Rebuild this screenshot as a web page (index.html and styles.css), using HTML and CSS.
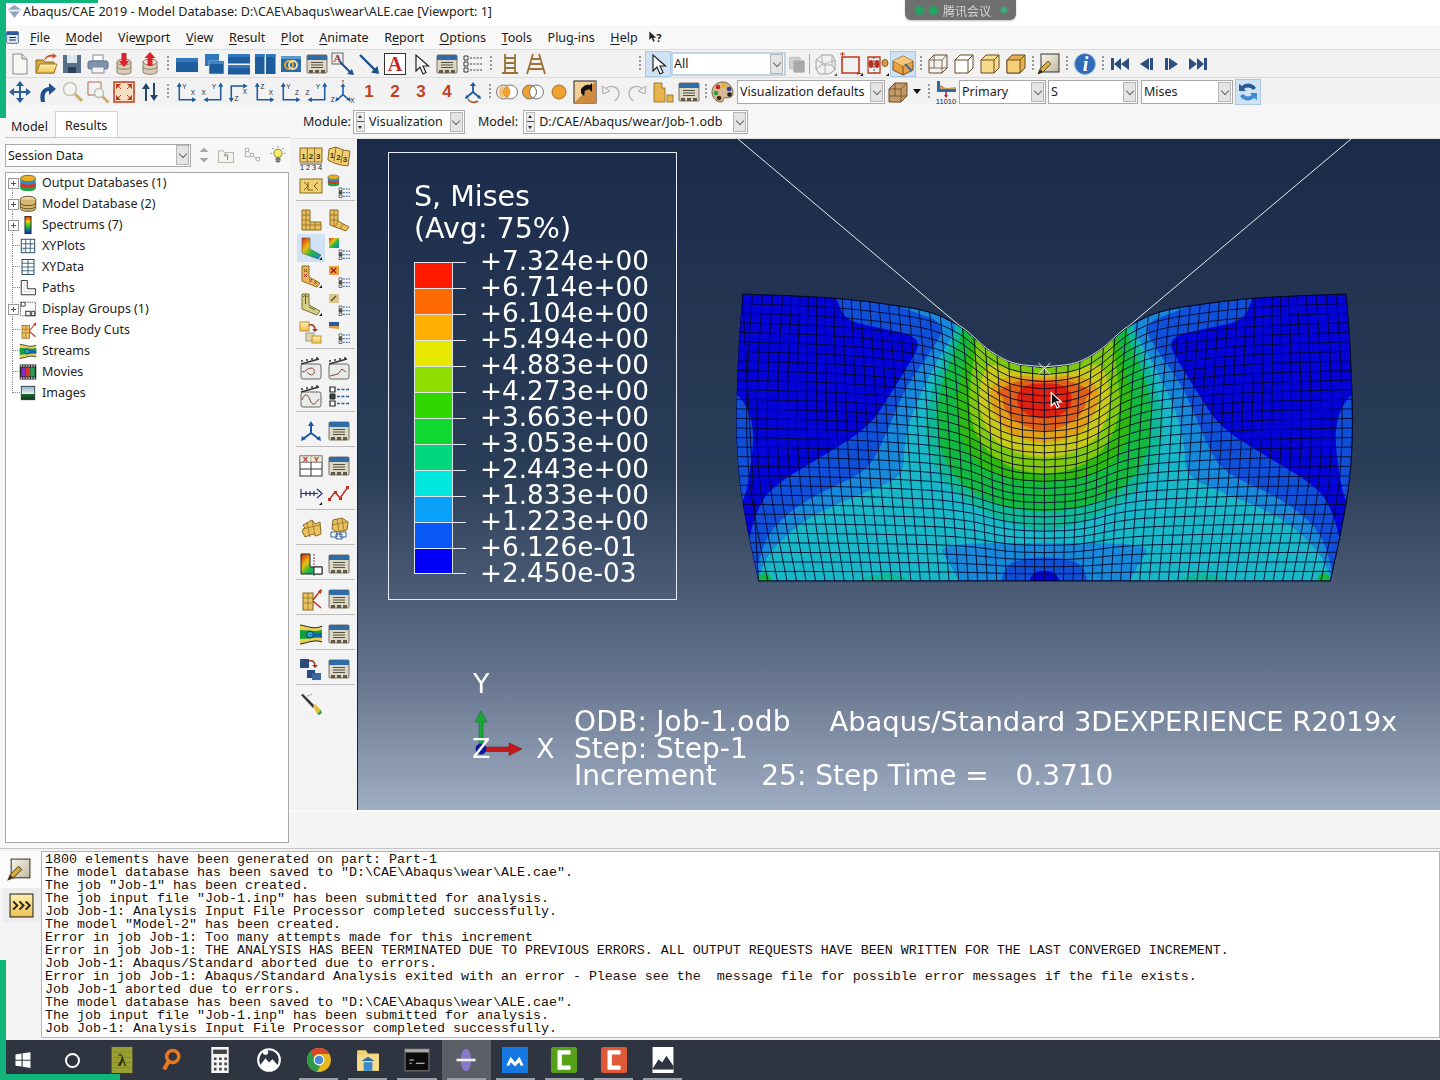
FILE: index.html
```html
<!DOCTYPE html>
<html lang="en">
<head>
<meta charset="utf-8">
<title>Abaqus/CAE 2019</title>
<link rel="stylesheet" href="styles.css">
</head>
<body>
<svg class="defs" aria-hidden="true">
<defs>
<linearGradient id="hot" x1="0" y1="0" x2="1" y2="1"><stop offset="0" stop-color="#e02010"/><stop offset=".35" stop-color="#e8c010"/><stop offset=".6" stop-color="#20b840"/><stop offset="1" stop-color="#1080e0"/></linearGradient>
<linearGradient id="spec" x1="0" y1="0" x2="0" y2="1"><stop offset="0" stop-color="#e81010"/><stop offset=".3" stop-color="#f0d000"/><stop offset=".6" stop-color="#10c040"/><stop offset="1" stop-color="#1020e0"/></linearGradient>
<linearGradient id="nt" x1="0" y1="0" x2="1" y2="1"><stop offset="0" stop-color="#f8f6ea"/><stop offset="1" stop-color="#bdb79c"/></linearGradient>
<linearGradient id="yel" x1="0" y1="0" x2="0" y2="1"><stop offset="0" stop-color="#fff0b0"/><stop offset="1" stop-color="#eec050"/></linearGradient>
<linearGradient id="sky" x1="0" y1="0" x2="0" y2="1"><stop offset="0" stop-color="#8ab0c8"/><stop offset=".55" stop-color="#e8f0f0"/><stop offset=".6" stop-color="#1a6030"/><stop offset="1" stop-color="#0c3c1c"/></linearGradient>
<symbol id="new" viewBox="0 0 24 24"><path d="M5 2h9l5 5v15H5z" fill="#f6f6f2" stroke="#8a8a8a"/><path d="M14 2v5h5" fill="#ddd" stroke="#8a8a8a"/></symbol>
<symbol id="open" viewBox="0 0 24 24"><path d="M2 8h7l2 2h9v11H2z" fill="#d9a848" stroke="#8a6a20"/><path d="M6 12h17l-3 9H2z" fill="url(#yel)" stroke="#a07a28"/><path d="M10 8c2-5 6-6 9-5l-1-2 5 3-5 3 1-2c-3-1-6 0-8 3z" fill="#d8502a"/></symbol>
<symbol id="save" viewBox="0 0 24 24"><rect x="3" y="3" width="18" height="18" fill="#56708c"/><rect x="7" y="3" width="10" height="8" fill="#dbe3ec"/><rect x="8" y="15" width="8" height="6" fill="#2c3e52"/></symbol>
<symbol id="print" viewBox="0 0 24 24"><rect x="7" y="3" width="10" height="6" fill="#fff" stroke="#889"/><rect x="2" y="9" width="20" height="8" rx="2" fill="#7e93b0" stroke="#5c6f8a"/><rect x="6" y="15" width="12" height="6" fill="#f4f4f4" stroke="#889"/></symbol>
<symbol id="dbdown" viewBox="0 0 24 24"><path d="M5 10v10c0 3 14 3 14 0V10z" fill="#d9cdb8" stroke="#8d8068"/><ellipse cx="12" cy="10" rx="7" ry="3" fill="#ece3d2" stroke="#8d8068"/><path d="M5 15c0 3 14 3 14 0" fill="none" stroke="#8d8068"/><path d="M9.500 1h5v8h3l-5.500 6-5.500-6h3z" fill="#d8242a"/></symbol>
<symbol id="dbup" viewBox="0 0 24 24"><path d="M5 10v10c0 3 14 3 14 0V10z" fill="#d9cdb8" stroke="#8d8068"/><ellipse cx="12" cy="10" rx="7" ry="3" fill="#ece3d2" stroke="#8d8068"/><path d="M5 15c0 3 14 3 14 0" fill="none" stroke="#8d8068"/><path d="M12 0l5.500 6h-3v8h-5V6h-3z" fill="#d8242a"/></symbol>
<symbol id="vp1" viewBox="0 0 24 24"><rect x="1" y="6" width="22" height="14" fill="#1d5d9b"/><rect x="1" y="6" width="22" height="4" fill="#2f78bd"/></symbol>
<symbol id="vp2" viewBox="0 0 24 24"><rect x="4" y="2" width="14" height="12" fill="#2f78bd"/><rect x="8" y="9" width="15" height="13" fill="#1d5d9b" stroke="#cfe0f0" stroke-width=".6"/><rect x="8" y="9" width="15" height="3" fill="#3f86c8"/></symbol>
<symbol id="vp3" viewBox="0 0 24 24"><rect x="1" y="2" width="22" height="9.500" fill="#1d5d9b"/><rect x="1" y="2" width="22" height="3" fill="#2f78bd"/><rect x="1" y="13" width="22" height="9.500" fill="#1d5d9b"/><rect x="1" y="13" width="22" height="3" fill="#2f78bd"/></symbol>
<symbol id="vp4" viewBox="0 0 24 24"><rect x="2" y="2" width="9.500" height="20" fill="#1d5d9b"/><rect x="2" y="2" width="9.500" height="3" fill="#2f78bd"/><rect x="13" y="2" width="9.500" height="20" fill="#1d5d9b"/><rect x="13" y="2" width="9.500" height="3" fill="#2f78bd"/></symbol>
<symbol id="link" viewBox="0 0 24 24"><rect x="2" y="4" width="20" height="16" fill="#2a6ba8"/><rect x="2" y="4" width="20" height="3" fill="#5b9ad0"/><circle cx="10" cy="13" r="4" fill="none" stroke="#f0a828" stroke-width="1.800"/><circle cx="14" cy="13" r="4" fill="none" stroke="#f4e0b0" stroke-width="1.800"/></symbol>
<symbol id="tbl" viewBox="0 0 24 24"><rect x="2" y="3" width="20" height="18" rx="1" fill="#dcd6c4" stroke="#7a7360"/><path d="M2 8V4a1 1 0 0 1 1-1h18a1 1 0 0 1 1 1v4z" fill="#2f6ca8"/><path d="M6 10.500h12M6 13h12M6 15.500h12" stroke="#55503f"/><path d="M4 18h4v3H4zM10 18h4v3h-4zM16 18h4v3h-4z" fill="#5e5844"/></symbol>
<symbol id="annot" viewBox="0 0 24 24"><rect x="1" y="1" width="11" height="11" fill="#eee" stroke="#666"/><text x="6.500" y="10" class="sv sm" fill="#903030">A</text><path d="M9 10l10 10" stroke="#17508f" stroke-width="2"/><path d="M23 23l-7-1 5-5z" fill="#17508f"/></symbol>
<symbol id="arrow" viewBox="0 0 24 24"><path d="M3 3l15 15" stroke="#17508f" stroke-width="2.400"/><path d="M22 22l-8-1.500 6.500-6.500z" fill="#17508f"/></symbol>
<symbol id="abox" viewBox="0 0 24 24"><rect x="1.500" y="1.500" width="21" height="21" fill="#fff" stroke="#333"/><text x="12" y="19" class="sv lg" fill="#c02828">A</text></symbol>
<symbol id="ptr" viewBox="0 0 24 24"><path d="M7 3v16l4-4 3 7 3-1.500-3-6.500h5.500z" fill="#fff" stroke="#222" stroke-width="1.200"/></symbol>
<symbol id="lst" viewBox="0 0 24 24"><path d="M3 4h4v4H3zM3 10h4v4H3zM3 16h4v4H3z" fill="#fff" stroke="#333"/><path d="M9 6h12M9 12h12M9 18h12" stroke="#334" stroke-dasharray="2 1.400"/></symbol>
<symbol id="lad" viewBox="0 0 24 24"><path d="M7 2v20M17 2v20M7 6h10M7 11h10M7 16h10M4 21h16" stroke="#9a7238" stroke-width="1.800" fill="none"/></symbol>
<symbol id="lad2" viewBox="0 0 24 24"><path d="M9 2L3 22M15 2l6 20M7.500 7h9M6 12h12M4.500 17h15" stroke="#9a7238" stroke-width="1.800" fill="none"/></symbol>
<symbol id="pan" viewBox="0 0 24 24"><path d="M12 1l4 5h-3v5h5V8l5 4-5 4v-3h-5v5h3l-4 5-4-5h3v-5H6v3l-5-4 5-4v3h5V6H8z" fill="#2b5f9e"/></symbol>
<symbol id="rot" viewBox="0 0 24 24"><path d="M7 22c-2-9 1-14 8-15V3l7 6-7 6v-4c-4 0-5 4-4 11z" fill="#1f4f8c"/></symbol>
<symbol id="mag" viewBox="0 0 24 24"><circle cx="10" cy="9" r="6.500" fill="#f4f4f0" stroke="#c4c4bc" stroke-width="1.500"/><path d="M15 14l7 7" stroke="#d0a868" stroke-width="3"/></symbol>
<symbol id="bzoom" viewBox="0 0 24 24"><path d="M2 2h13v8M2 2v13h8" stroke="#b06a50" fill="none"/><circle cx="13" cy="13" r="4.500" fill="#f4f4f0" stroke="#bbb" stroke-width="1.400"/><path d="M16.500 16.500l6 6" stroke="#d0a868" stroke-width="2.600"/></symbol>
<symbol id="fit" viewBox="0 0 24 24"><rect x="2" y="2" width="20" height="20" fill="#f6dec0" stroke="#c23c20" stroke-width="1.500"/><path d="M4 4l5 0-5 5zM20 4v5l-5-5zM4 20v-5l5 5zM20 20h-5l5-5z" fill="#c23c20"/><path d="M5 5l4 4M19 5l-4 4M5 19l4-4M19 19l-4-4" stroke="#c23c20"/></symbol>
<symbol id="flip" viewBox="0 0 24 24"><path d="M8 3l4 6H9v12H7V9H4zM16 21l-4-6h3V3h2v12h3z" fill="#22466f"/></symbol>
<symbol id="ax1" viewBox="0 0 28 24"><path d="M5 5v16h16" stroke="#1c5aa0" stroke-width="1.800" fill="none"/><path d="M5 1l3 5H2zM25 21l-5 3v-6z" fill="#1c5aa0"/><text x="11" y="8" class="sx">Y</text><text x="21" y="16" class="sx">X</text></symbol>
<symbol id="ax2" viewBox="0 0 28 24"><path d="M23 5v16H7" stroke="#1c5aa0" stroke-width="1.800" fill="none"/><path d="M23 1l3 5h-6zM3 21l5-3v6z" fill="#1c5aa0"/><text x="15" y="8" class="sx">Y</text><text x="3" y="16" class="sx">X</text></symbol>
<symbol id="ax3" viewBox="0 0 28 24"><path d="M5 20V5h15" stroke="#1c5aa0" stroke-width="1.800" fill="none"/><path d="M5 24l-3-5h6zM24 5l-5-3v6z" fill="#1c5aa0"/><text x="11" y="22" class="sx">Z</text><text x="21" y="14" class="sx">X</text></symbol>
<symbol id="ax4" viewBox="0 0 28 24"><path d="M5 5v16h16" stroke="#1c5aa0" stroke-width="1.800" fill="none"/><path d="M5 1l3 5H2zM25 21l-5 3v-6z" fill="#1c5aa0"/><text x="11" y="8" class="sx">Z</text><text x="21" y="16" class="sx">X</text></symbol>
<symbol id="ax5" viewBox="0 0 28 24"><path d="M5 5v16h16" stroke="#1c5aa0" stroke-width="1.800" fill="none"/><path d="M5 1l3 5H2zM25 21l-5 3v-6z" fill="#1c5aa0"/><text x="11" y="8" class="sx">Y</text><text x="21" y="16" class="sx">Z</text></symbol>
<symbol id="ax6" viewBox="0 0 28 24"><path d="M23 5v16H7" stroke="#1c5aa0" stroke-width="1.800" fill="none"/><path d="M23 1l3 5h-6zM3 21l5-3v6z" fill="#1c5aa0"/><text x="15" y="8" class="sx">Y</text><text x="3" y="16" class="sx">Z</text></symbol>
<symbol id="ax7" viewBox="0 0 28 26"><path d="M14 16V6M14 16l-7 6M14 16l7 6" stroke="#1c5aa0" stroke-width="1.800"/><path d="M14 3l3 4h-6zM5 24l1-5 4 3zM23 24l-1-5-4 3z" fill="#1c5aa0"/><text x="14" y="3" class="sx">Y</text><text x="2" y="25" class="sx">Z</text><text x="25" y="26" class="sx">X</text></symbol>
<symbol id="axr" viewBox="0 0 24 24"><path d="M12 12V5M12 12l-6 5M12 12l6 5" stroke="#1c5aa0" stroke-width="1.800"/><path d="M12 2l3 4H9zM4 19l1-4 3 3zM20 19l-1-4-3 3z" fill="#1c5aa0"/><path d="M7 19c2 4 7 4 10 2" stroke="#b04a20" stroke-width="1.600" fill="none"/></symbol>
<symbol id="venn1" viewBox="0 0 24 24"><circle cx="8.500" cy="12" r="7" fill="#f4f0e8" stroke="#777"/><circle cx="15.500" cy="12" r="7" fill="#fff" stroke="#777"/><path d="M12 6a7 7 0 0 1 0 12 7 7 0 0 1 0-12z" fill="#eea030"/><path d="M4 12a4.500 6 0 0 1 4.500-6v12A4.500 6 0 0 1 4 12z" fill="#f4c070"/></symbol>
<symbol id="venn2" viewBox="0 0 24 24"><circle cx="15.500" cy="12" r="7" fill="#fff" stroke="#777"/><circle cx="8.500" cy="12" r="7" fill="#eea030" stroke="#777"/><path d="M12 6a7 7 0 0 1 0 12 7 7 0 0 1 0-12z" fill="#fff" stroke="#777"/></symbol>
<symbol id="dot" viewBox="0 0 24 24"><circle cx="12" cy="12" r="7" fill="#eea030" stroke="#a87020"/></symbol>
<symbol id="boxc" viewBox="0 0 24 24"><rect x="1" y="1" width="22" height="22" fill="#f0d098" stroke="#222"/><path d="M1 23L23 1v22z" fill="#d08a40"/><path d="M8 9c3-4 6-5 9-4l2-2v9l-3-3-4 2-1 5-3-3z" fill="#111"/></symbol>
<symbol id="undo" viewBox="0 0 24 24"><path d="M6 10c4-6 14-4 14 4 0 3-2 5-4 7" stroke="#b4b4b4" stroke-width="1.300" fill="none"/><path d="M3 6l1 8 7-3z" fill="#f0f0f0" stroke="#aaa"/></symbol>
<symbol id="redo" viewBox="0 0 24 24"><path d="M18 10c-4-6-14-4-14 4 0 3 2 5 4 7" stroke="#b4b4b4" stroke-width="1.300" fill="none"/><path d="M21 6l-1 8-7-3z" fill="#f0f0f0" stroke="#aaa"/></symbol>
<symbol id="dg" viewBox="0 0 24 24"><path d="M3 3h8v5h3v14H3z" fill="#eab24c" stroke="#8a6a20" stroke-width=".8"/><rect x="16" y="15" width="6" height="7" fill="#eab24c" stroke="#8a6a20" stroke-width=".8"/></symbol>
<symbol id="pal" viewBox="0 0 24 24"><path d="M12 2C5 2 1 7 1 12s4 10 9 10c3 0 2-3 3-4s5 1 8-2c3-4-1-14-9-14z" fill="#d8b890" stroke="#7a6040"/><circle cx="7" cy="7" r="2.300" fill="#c82020"/><circle cx="13" cy="5.500" r="2.300" fill="#e8b020"/><circle cx="18" cy="9" r="2.300" fill="#2a3fa0"/><circle cx="5" cy="13" r="2.300" fill="#20a040"/><circle cx="8" cy="18" r="2.300" fill="#402818"/><circle cx="18.500" cy="14.500" r="2.300" fill="#222"/></symbol>
<symbol id="cub" viewBox="0 0 24 24"><path d="M3 9l6-6h12v13l-6 6H3z" fill="#c49a68" stroke="#6a4c28"/><path d="M3 9h12v13M15 9l6-6M9 3v13H3M9 16h12" fill="none" stroke="#6a4c28" stroke-width=".8"/></symbol>
<symbol id="prim" viewBox="0 0 24 24"><path d="M3 1h3v8h16v3H3z" fill="#2b6ca8"/><path d="M6 5c3 0 3 3 7 3s5-1 9-1v2H6z" fill="#c8a060"/><path d="M12 12v4" stroke="#c02020" stroke-width="1.500"/><path d="M12 18l-2-3h4z" fill="#c02020"/><text x="12" y="24" class="sx">11010</text></symbol>
<symbol id="copy" viewBox="0 0 24 24"><rect x="3" y="4" width="13" height="14" rx="1" fill="#d0d0d0" stroke="#bbb"/><rect x="8" y="8" width="13" height="14" rx="1" fill="#a8a8a8" stroke="#bbb"/></symbol>
<symbol id="wire3" viewBox="0 0 24 24"><path d="M3 8l6-5h10l3 5v10l-6 4H6l-3-5z" fill="#f0f0f0" stroke="#a0a0a0"/><path d="M3 8l9 4 10-4M12 12v10M9 3v10l-6 4M19 3v10l3 5M9 13h10" fill="none" stroke="#a0a0a0" stroke-width=".8"/><path d="M24 24h-3l3-3z" fill="#555"/></symbol>
<symbol id="rect" viewBox="0 0 24 24"><path d="M3 5v16h17V5z" fill="none" stroke="#c0381c" stroke-width="1.600"/><path d="M1 2h5M3.500 0v4M19 20v3M17.500 21.500h5" stroke="#c0381c"/><path d="M24 24h-3l3-3z" fill="#111"/></symbol>
<symbol id="nds" viewBox="0 0 24 24"><path d="M3 5v16h12V5z" fill="none" stroke="#c0381c" stroke-width="1.300"/><path d="M9 5v16" stroke="#444" stroke-dasharray="2 1"/><ellipse cx="6" cy="12" rx="2.500" ry="4" fill="#b83020"/><ellipse cx="12" cy="12" rx="2.500" ry="4" fill="#b83020"/><ellipse cx="20" cy="11" rx="3" ry="3.500" fill="#d0a040" stroke="#806020"/><path d="M24 24h-3l3-3z" fill="#111"/></symbol>
<symbol id="boxor" viewBox="0 0 24 24"><path d="M2 9l10-5 10 5v9l-10 5-10-5z" fill="#e8a040" stroke="#7a4c18"/><path d="M2 9l10 5 10-5M12 14v9" fill="none" stroke="#7a4c18"/><path d="M2 9l10-5 10 5-10 5z" fill="#f4c878"/><path d="M14 12l7 7" stroke="#4a6a90" stroke-width="2.200"/></symbol>
<symbol id="wc1" viewBox="0 0 24 24"><path d="M3 8l5-5h13v13l-5 5H3z" fill="none" stroke="#6a4c28"/><path d="M3 8h13v13M16 8l5-5M8 3v13H3M8 16h13" fill="none" stroke="#6a4c28" stroke-width=".8"/></symbol>
<symbol id="wc2" viewBox="0 0 24 24"><path d="M3 8l5-5h13v13l-5 5H3z" fill="#fff" stroke="#6a4c28"/><path d="M3 8h13v13M16 8l5-5" fill="none" stroke="#6a4c28"/></symbol>
<symbol id="wc3" viewBox="0 0 24 24"><path d="M3 8l5-5h13v13l-5 5H3z" fill="#f8dc8c" stroke="#6a4c28"/><path d="M3 8h13v13M16 8l5-5" fill="none" stroke="#6a4c28"/></symbol>
<symbol id="wc4" viewBox="0 0 24 24"><path d="M3 8l5-5h13v13l-5 5H3z" fill="#e8b048" stroke="#6a4c28"/><path d="M3 8h13v13H3z" fill="#f6d078" stroke="#6a4c28"/><path d="M16 8l5-5" fill="none" stroke="#6a4c28"/></symbol>
<symbol id="note" viewBox="0 0 24 24"><rect x="4" y="2" width="18" height="18" fill="url(#nt)" stroke="#333"/><path d="M1 22l2-5 8-8 3 3-8 8z" fill="#d8b040" stroke="#6a5020"/><path d="M1 22l2-5 3 3z" fill="#333"/></symbol>
<symbol id="info" viewBox="0 0 24 24"><circle cx="12" cy="12" r="10.500" fill="#2f6cb8" stroke="#9cbcdc"/><text x="12.500" y="18.500" class="sv lg it" fill="#fff">i</text></symbol>
<symbol id="first" viewBox="0 0 24 24"><path d="M3 6h3v12H3zM13 6v12l-7-6zM21 6v12l-8-6z" fill="#2a4f80"/></symbol>
<symbol id="prev" viewBox="0 0 24 24"><path d="M15 6v12l-9-6zM16 6h3v12h-3z" fill="#2a4f80"/></symbol>
<symbol id="next" viewBox="0 0 24 24"><path d="M9 6v12l9-6zM8 6H5v12h3z" fill="#2a4f80"/></symbol>
<symbol id="last" viewBox="0 0 24 24"><path d="M21 6h-3v12h3zM11 6v12l7-6zM3 6v12l8-6z" fill="#2a4f80"/></symbol>
<symbol id="sync" viewBox="0 0 24 24"><path d="M20 8C17 3 10 2 6 6L3 4v7h7L8 9c3-2 6-2 9 1z" fill="#2a5a9a"/><path d="M4 16c3 5 10 6 14 2l3 2v-7h-7l2 2c-3 2-6 2-9-1z" fill="#3f8ad0"/></symbol>
<symbol id="t123" viewBox="0 0 24 24"><rect x="1" y="2" width="22" height="14" fill="#f2d070" stroke="#8a6a20"/><path d="M8.300 2v14M15.600 2v14" stroke="#8a6a20"/><text x="4.600" y="13" class="sm2">1</text><text x="12" y="13" class="sm2">2</text><text x="19.300" y="13" class="sm2">3</text><path d="M1 18h22" stroke="#555"/><text x="3" y="23.500" class="sx">1</text><text x="9" y="23.500" class="sx">2</text><text x="15" y="23.500" class="sx">3</text><text x="21" y="23.500" class="sx">4</text></symbol>
<symbol id="t123b" viewBox="0 0 24 24"><path d="M2 3l7-2 7 3 7 1-2 15-7-1-7-2-6-3z" fill="#f2d070" stroke="#8a6a20"/><path d="M9 1L7 15M16 4l-2 13" stroke="#8a6a20"/><text x="5" y="12" class="sm2">1</text><text x="11.500" y="14" class="sm2">2</text><text x="18" y="16" class="sm2">3</text></symbol>
<symbol id="tsy" viewBox="0 0 24 24"><rect x="1" y="5" width="22" height="14" fill="#f2d070" stroke="#8a6a20"/><path d="M5 8l4 4-4 4M9 8v8h5M19 8l-4 4 4 4" stroke="#7a5818" fill="none"/></symbol>
<symbol id="stack" viewBox="0 0 14 14"><ellipse cx="7" cy="3.500" rx="6" ry="2.500" fill="#e8b020" stroke="#6a5020" stroke-width=".6"/><path d="M1 3.500v7c0 3 12 3 12 0v-7c0 3-12 3-12 0z" fill="#2090d0"/><path d="M1 6c0 3 12 3 12 0v2.500c0 3-12 3-12 0z" fill="#e03020"/><path d="M1 8.500c0 3 12 3 12 0V11c0 3-12 3-12 0z" fill="#20a040"/></symbol>
<symbol id="opt" viewBox="0 0 24 24"><path d="M12 14h3v2.500h-3zM12 17.500h3V20h-3zM12 21h3v2.500h-3z" fill="#fff" stroke="#333" stroke-width=".7"/><path d="M12 17.500h3V20h-3z" fill="#3a5a3a"/><path d="M16 15h7M16 18.700h7M16 22.300h7" stroke="#2e5c98" stroke-dasharray="1.800 1"/></symbol>
<symbol id="lm" viewBox="0 0 24 24"><path d="M3 2h8v12h11v8H3z" fill="#e8c060" stroke="#8a6a20"/><path d="M7 2v20M3 7h8M3 12h8M3 17h19M11 14v8M16 14v8" stroke="#8a6a20" stroke-width=".8"/></symbol>
<symbol id="lmb" viewBox="0 0 24 24"><path d="M3 2h8v11l11 6-3 4L3 17z" fill="#e8c060" stroke="#8a6a20"/><path d="M7 2v17M3 7h8M3 12h8M11 13l-3 6M16 16l-3 5" stroke="#8a6a20" stroke-width=".8"/></symbol>
<symbol id="lc" viewBox="0 0 24 24"><path d="M3 2h8v11l11 6-3 4L3 17z" fill="url(#hot)" stroke="#444" stroke-width=".5"/><path d="M23 24h-3l3-3z" fill="#111"/></symbol>
<symbol id="optc" viewBox="0 0 24 24"><use href="#opt"/><path d="M2 2h10v10H2z" fill="url(#hot)"/></symbol>
<symbol id="lx" viewBox="0 0 24 24"><path d="M3 2h7v11l11 6-3 4L3 17z" fill="#eab45a" stroke="#8a6a20"/><path d="M5 5l3 3M8 5l-3 3M5 10l3 3M8 10l-3 3M10 15l3 3M13 15l-3 3M15 17l3 3M18 17l-3 3" stroke="#a03020" stroke-width=".9"/><path d="M23 24h-3l3-3z" fill="#111"/></symbol>
<symbol id="optx" viewBox="0 0 24 24"><use href="#opt"/><rect x="2" y="2" width="10" height="9" fill="#e8a040"/><path d="M4 4l5 5M9 4L4 9" stroke="#a02010" stroke-width="1.400"/></symbol>
<symbol id="ly" viewBox="0 0 24 24"><path d="M3 2h7v11l11 6-3 4L3 17z" fill="#d4d08a" stroke="#7a7030"/><path d="M6.500 4v8M4 5l2.500-2L9 5" stroke="#4a6030" fill="none"/><path d="M10 15l6 3" stroke="#6a6020"/><path d="M23 24h-3l3-3z" fill="#111"/></symbol>
<symbol id="opty" viewBox="0 0 24 24"><use href="#opt"/><rect x="2" y="2" width="10" height="9" fill="#d8c890"/><path d="M4 9l5-5" stroke="#6a5020" stroke-width="1.400"/></symbol>
<symbol id="copyy" viewBox="0 0 24 24"><rect x="1" y="2" width="9" height="9" fill="url(#yel)" stroke="#c09030"/><path d="M10 5c4-1 6 1 6 5" stroke="#a03020" stroke-width="1.400" fill="none"/><path d="M16 12l-3-3h6z" fill="#a03020"/><rect x="7" y="13" width="8" height="8" fill="#e0d8b0" stroke="#998"/><rect x="13" y="16" width="9" height="7" fill="url(#yel)" stroke="#c09030"/></symbol>
<symbol id="optb" viewBox="0 0 24 24"><use href="#opt"/><rect x="2" y="2" width="10" height="4" fill="#2a5a9a"/><path d="M2 6h10v3c-4 0-6-1-10-1z" fill="#e0a040"/></symbol>
<symbol id="mov" viewBox="0 0 24 24"><rect x="2" y="8" width="20" height="15" rx="2" fill="#e8ece8" stroke="#666"/><path d="M2 8l18-5M2 5h2M7 4h2M12 3h2M17 2h2" stroke="#333" stroke-width="1.400"/><path d="M3 16c4 0 5-4 9-4 3 0 4 3 3 5-1 3-5 2-7-1" fill="none" stroke="#884030"/></symbol>
<symbol id="mov2" viewBox="0 0 24 24"><rect x="2" y="8" width="20" height="15" rx="2" fill="#e8ece8" stroke="#666"/><path d="M2 8l18-5M2 5h2M7 4h2M12 3h2M17 2h2" stroke="#333" stroke-width="1.400"/><path d="M3 20l8-2 4-5 4 3" fill="none" stroke="#884030"/></symbol>
<symbol id="mov3" viewBox="0 0 24 24"><rect x="2" y="8" width="20" height="15" rx="2" fill="#e8ece8" stroke="#666"/><path d="M2 8l18-5M2 5h2M7 4h2M12 3h2M17 2h2" stroke="#333" stroke-width="1.400"/><path d="M3 16c3-7 5-7 8 0s5 4 9-1" fill="none" stroke="#884030"/></symbol>
<symbol id="lst2" viewBox="0 0 24 24"><path d="M3 3h5v5H3zM3 17h5v5H3z" fill="#fff" stroke="#222" stroke-width="1.200"/><path d="M3 10h5v5H3z" fill="#3a4a3a" stroke="#222"/><path d="M10 5.500h12M10 12.500h12M10 19.500h12" stroke="#2e5c98" stroke-width="1.400" stroke-dasharray="3 1.500"/></symbol>
<symbol id="tri" viewBox="0 0 24 24"><path d="M12 14V6M12 14L4 20M12 14l8 6" stroke="#1c5aa0" stroke-width="2"/><path d="M12 2l3 5H9zM2 22l1-5 4 3zM22 22l-1-5-4 3z" fill="#1c5aa0"/></symbol>
<symbol id="xyt" viewBox="0 0 24 24"><rect x="1" y="2" width="22" height="20" fill="#fff" stroke="#333"/><path d="M12 2v20M1 8h22M1 15h22" stroke="#333"/><rect x="1" y="2" width="22" height="6" fill="#e8e0c8" opacity=".7"/><text x="6.500" y="7.500" class="sm2 red">X</text><text x="17.500" y="7.500" class="sm2 red">Y</text></symbol>
<symbol id="pth" viewBox="0 0 24 24"><path d="M2 7v9M2 11.500h17M7 9v5M11 9v5M15 9v5" stroke="#2a2a70" stroke-width="1.200" fill="none"/><path d="M18 7l5 4.500-5 4.500" stroke="#2a2a70" stroke-width="1.200" fill="none"/><path d="M23 23h-3l3-3z" fill="#111"/></symbol>
<symbol id="xyl" viewBox="0 0 24 24"><path d="M2 18l6-8 5 6 8-11" stroke="#c03020" stroke-width="1.400" fill="none"/><path d="M1 16h3v3H1zM7 9h3v3H7zM12 15h3v3h-3zM19 4h3v3h-3z" fill="#c03020"/></symbol>
<symbol id="fc2" viewBox="0 0 24 24"><path d="M4 8l9-5 3 4 5-2 1 12-5 2-3-2-8 3-3-6 3-3z" fill="#e8c060" stroke="#8a6a20"/><path d="M8 6l3 14M13 3l3 15M3 12l18-4" stroke="#8a6a20" stroke-width=".7"/></symbol>
<symbol id="fc3" viewBox="0 0 24 24"><path d="M6 3l9-2 6 4-1 8-10 2-5-3z" fill="#e8c060" stroke="#8a6a20"/><path d="M10 2l2 12M15 2l2 11M5 8l15-3" stroke="#8a6a20" stroke-width=".7"/><path d="M4 15h6v5H4zM9 17h6v5H9zM13 15h6v5h-6z" fill="#fff" stroke="#2e5c98"/></symbol>
<symbol id="lcut" viewBox="0 0 24 24"><path d="M2 2h9v13h12v7H2z" fill="url(#hot)" stroke="#222"/><path d="M15 2v22" stroke="#b03040" stroke-dasharray="2 1"/><rect x="15" y="15" width="8" height="7" fill="#fff" stroke="#222"/></symbol>
<symbol id="fb" viewBox="0 0 24 24"><rect x="4" y="6" width="10" height="17" fill="#e8c060" stroke="#8a6a20"/><path d="M4 11h10M4 16h10M9 6v17" stroke="#8a6a20" stroke-width=".7"/><path d="M14 13L22 3M14 14l8 7" stroke="#c03020" stroke-width="1.400"/><path d="M23 2l-1 5-3-3z" fill="#c03020"/></symbol>
<symbol id="str" viewBox="0 0 24 24"><path d="M1 3c8 1 14 5 22 1v16c-8-3-14 1-22 2z" fill="#e8d050"/><path d="M1 8c8 0 14 2 22 0v8c-8-1-14 1-22 1z" fill="#10a040"/><path d="M8 11h15v4c-5-1-11 1-15-1z" fill="#1060c0"/><circle cx="11" cy="12.500" r="3.500" fill="#20a0c0" stroke="#0a3a60"/><path d="M1 3c8 1 14 5 22 1M1 22c8-1 14-5 22-2" stroke="#222" fill="none"/></symbol>
<symbol id="cpd" viewBox="0 0 24 24"><rect x="1" y="2" width="9" height="9" fill="#2a4a80"/><path d="M10 4c4-1 6 1 6 5" stroke="#a03020" stroke-width="1.400" fill="none"/><path d="M16 11l-3-3h6z" fill="#a03020"/><rect x="8" y="13" width="8" height="8" fill="#2a4a80"/><rect x="13" y="16" width="9" height="7" fill="#3a6aa0"/></symbol>
<symbol id="pen" viewBox="0 0 24 24"><path d="M2 3l2-1 12 12-2 2z" fill="#333"/><path d="M14 14l2-2 6 6-4 4z" fill="#e8c040"/><path d="M18 22l4-4 1 3-3 2z" fill="#30a040"/><path d="M8 4c2 0 3-1 5-2" stroke="#888" stroke-dasharray="2 1" fill="none"/></symbol>
<symbol id="updn" viewBox="0 0 16 24"><path d="M8 2l6 6H2zM8 22l6-6H2z" fill="#a8a8a8"/></symbol>
<symbol id="dirup" viewBox="0 0 24 24"><path d="M3 7h6l1 2h11v12H3z" fill="#f4f4ee" stroke="#a8a8a0"/><path d="M14 18v-6H10l2-2M10 12l2 2" stroke="#777" fill="none"/></symbol>
<symbol id="fam" viewBox="0 0 24 24"><path d="M4 4h4v4H4zM10 10h4v4h-4zM17 15h4v4h-4z" fill="#fff" stroke="#a0a0a0"/><path d="M8 8l2 2M14 14l3 2M4 8v6h6" stroke="#a0a0a0" fill="none"/></symbol>
<symbol id="bulb" viewBox="0 0 24 24"><circle cx="12" cy="10" r="5" fill="#f4ec70" stroke="#7a7020"/><path d="M9 15h6v4H9z" fill="#777"/><path d="M10 20h4" stroke="#444" stroke-width="1.500"/><path d="M12 1v2M3 10h2M19 10h2M5 4l2 1M19 4l-2 1" stroke="#777"/></symbol>
<symbol id="xyp" viewBox="0 0 24 24"><rect x="3" y="3" width="18" height="18" fill="#fff" stroke="#12405c" stroke-width="1.200"/><path d="M9 3v18M15 3v18M3 9h18M3 15h18" stroke="#12405c"/><path d="M5 18l4-3M15 12l3-3" stroke="#5a7a90"/></symbol>
<symbol id="xyd" viewBox="0 0 24 24"><rect x="4" y="2" width="16" height="20" fill="#fff" stroke="#12405c" stroke-width="1.200"/><path d="M12 2v20M4 7h16M4 12h16M4 17h16" stroke="#12405c"/></symbol>
<symbol id="ppath" viewBox="0 0 24 24"><path d="M3 2h8v11h11v8H3z" fill="#fff" stroke="#222" stroke-width="1.200"/><path d="M7 2v15h15" stroke="#ccc" fill="none"/></symbol>
<symbol id="dgr" viewBox="0 0 24 24"><path d="M2 3h6v5H2zM2 8v13h6M8 3h14v18H8" fill="#fff" stroke="#444" stroke-dasharray="2 1"/><rect x="3" y="3" width="5" height="5" fill="#fff" stroke="#333"/><rect x="9" y="15" width="6" height="6" fill="#fff" stroke="#222" stroke-width="1.200"/><rect x="17" y="15" width="4" height="6" fill="#fff" stroke="#222" stroke-width="1.200"/></symbol>
<symbol id="mvi" viewBox="0 0 24 24"><rect x="1" y="2" width="22" height="20" fill="#222"/><path d="M2 4h20M2 20h20" stroke="#ddd" stroke-dasharray="2 1.500" stroke-width="2"/><rect x="3" y="6" width="6" height="12" fill="#8030c0"/><rect x="9" y="6" width="6" height="12" fill="#e03030"/><rect x="15" y="6" width="6" height="12" fill="#20a050"/></symbol>
<symbol id="img" viewBox="0 0 24 24"><rect x="3" y="3" width="18" height="18" fill="url(#sky)" stroke="#122"/></symbol>
<symbol id="mdb" viewBox="0 0 14 14"><ellipse cx="7" cy="3.500" rx="6" ry="2.500" fill="#e8d8a8" stroke="#5a4a20" stroke-width=".7"/><path d="M1 3.500v7c0 3 12 3 12 0v-7" fill="#d8b870" stroke="#5a4a20" stroke-width=".7"/><path d="M1 6c0 3 12 3 12 0M1 8.500c0 3 12 3 12 0" fill="none" stroke="#5a4a20" stroke-width=".7"/></symbol>
<symbol id="win" viewBox="0 0 24 24"><path d="M2 4.500l8-1.200v8.200H2zM11.500 3.100L22 1.600v10H11.500zM2 13h8v7.800l-8-1.200zM11.500 13H22v9.500l-10.500-1.500z" fill="#fff"/></symbol>
<symbol id="lam" viewBox="0 0 24 30"><rect width="24" height="30" fill="#9aa030"/><path d="M2 6h20M2 12h20M2 18h20M2 24h20" stroke="#7a8020" stroke-width=".8"/><text x="12" y="22" class="sv lg dk">λ</text></symbol>
<symbol id="ser" viewBox="0 0 24 30"><circle cx="14" cy="11" r="7" fill="none" stroke="#ea7a20" stroke-width="4"/><path d="M9 17l-5 9" stroke="#ea7a20" stroke-width="4.500"/></symbol>
<symbol id="calc" viewBox="0 0 20 30"><rect width="20" height="30" fill="#f4f4f4"/><rect x="2" y="3" width="16" height="5" fill="#444"/><path d="M3 12h3v3H3zM9 12h3v3H9zM15 12h3v3h-3zM3 18h3v3H3zM9 18h3v3H9zM15 18h3v3h-3zM3 24h3v3H3zM9 24h3v3H9zM15 24h3v3h-3z" fill="#444"/></symbol>
<symbol id="mtc" viewBox="0 0 30 30"><circle cx="15" cy="15" r="12.500" fill="#2e3440" stroke="#fff" stroke-width="2.400"/><path d="M4 22l7-9 4 5 4-4 7 8c-5 7-17 7-22 0z" fill="#fff"/><circle cx="11" cy="6" r="3" fill="#fff"/></symbol>
<symbol id="chr" viewBox="0 0 24 24"><circle cx="12" cy="12" r="11" fill="#e8b820"/><path d="M12 1a11 11 0 0 1 9.500 5.500H12a5.500 5.500 0 0 0-5 3L4 4.500A11 11 0 0 1 12 1z" fill="#d8442e"/><path d="M1 12a11 11 0 0 1 3-8l5 8a5 5 0 0 0 4 5.500L10 23A11 11 0 0 1 1 12z" fill="#2c9a48"/><circle cx="12" cy="12" r="5" fill="#fff"/><circle cx="12" cy="12" r="4" fill="#4a88d8"/></symbol>
<symbol id="fold" viewBox="0 0 24 24"><path d="M2 3h8l2 3h10v16H2z" fill="#f0d070"/><rect x="2" y="7" width="20" height="15" fill="#f4dc8c"/><path d="M8 14h8v8H8z" fill="#3a8ad0"/><path d="M6 13l6-4 6 4z" fill="#2a6ab0"/></symbol>
<symbol id="cmd" viewBox="0 0 24 24"><rect x="1" y="2" width="22" height="20" fill="#0c0c0c" stroke="#777"/><rect x="1" y="2" width="22" height="3" fill="#aaa"/><path d="M5 12h4M5 15h2M11 15h8" stroke="#ddd"/></symbol>
<symbol id="abq" viewBox="0 0 24 30"><ellipse cx="12" cy="15" rx="6" ry="13" fill="#8878c8"/><rect x="1" y="13.500" width="22" height="3" fill="#f0f0f0"/></symbol>
<symbol id="mx" viewBox="0 0 24 24"><rect width="24" height="24" fill="#1478e0"/><path d="M4 17l4-8 4 5 4-5 4 8h-3l-1-3-4 4-4-4-1 3z" fill="#fff"/></symbol>
<symbol id="gc" viewBox="0 0 24 24"><rect width="24" height="24" rx="2" fill="#58a018"/><path d="M18 5H8v14h10" fill="none" stroke="#fff" stroke-width="4"/></symbol>
<symbol id="oc" viewBox="0 0 24 24"><rect width="24" height="24" rx="2" fill="#e05a38"/><path d="M18 5H8v14h10" fill="none" stroke="#fff" stroke-width="4"/></symbol>
<symbol id="mtw" viewBox="0 0 24 30"><rect width="24" height="30" fill="#fff"/><path d="M0 25l7-11 4 4 5-8 8 12v8H0z" fill="#2e3440"/><path d="M0 26h24v4H0z" fill="#fff"/></symbol>
<symbol id="arr" viewBox="0 0 24 24"><path d="M7 2v18l4.500-4.500 3 7 3-1.500-3-6.500h6z" fill="#111" stroke="#fff" stroke-width="1.600"/></symbol>
<symbol id="hlp" viewBox="0 0 18 18"><path d="M3 2v11l3-3 2 5 2-1-2-4h4z" fill="#222"/></symbol>
<symbol id="winm" viewBox="0 0 18 18"><rect x="2" y="2" width="14" height="14" rx="1" fill="#dfe9f4" stroke="#2e5c98"/><rect x="2" y="2" width="14" height="4" fill="#2e5c98"/><path d="M5 9h8M5 12h8" stroke="#222" stroke-width="1.400"/></symbol>
<symbol id="ttl" viewBox="0 0 18 18"><path d="M9 2l7 5-7 9-7-9z" fill="#8fa6c2"/><path d="M2 7h14v2H2z" fill="#e8eef4"/></symbol>
</defs>
</svg>

<div class="frame frame-top"></div>
<div class="frame frame-left"></div>
<div class="frame frame-left2"></div>
<div class="frame frame-bot"></div>
<div class="meet"><i class="mdot"></i><i class="mdot"></i><span class="mname">腾讯会议</span><i class="mdot small"></i></div>

<header class="titlebar"><svg class="ttlicon"><use href="#ttl"/></svg><span>Abaqus/CAE 2019 - Model Database: D:\CAE\Abaqus\wear\ALE.cae [Viewport: 1]</span></header>

<nav class="menubar">
<svg class="winicon"><use href="#winm"/></svg>
<span><u>F</u>ile</span><span><u>M</u>odel</span><span>Vie<u>w</u>port</span><span><u>V</u>iew</span><span><u>R</u>esult</span><span><u>P</u>lot</span><span><u>A</u>nimate</span><span>R<u>e</u>port</span><span><u>O</u>ptions</span><span><u>T</u>ools</span><span>Plu<u>g</u>-ins</span><span><u>H</u>elp</span>
<svg class="hlpicon"><use href="#hlp"/></svg><b class="hq">?</b>
</nav>

<section class="tbar tb1">
<div class="b"><svg><use href="#new"/></svg></div><div class="b"><svg><use href="#open"/></svg></div><div class="b"><svg><use href="#save"/></svg></div><div class="b"><svg><use href="#print"/></svg></div><div class="b"><svg><use href="#dbdown"/></svg></div><div class="b"><svg><use href="#dbup"/></svg></div>
<i class="grip"></i>
<div class="b"><svg><use href="#vp1"/></svg></div><div class="b"><svg><use href="#vp2"/></svg></div><div class="b"><svg><use href="#vp3"/></svg></div><div class="b"><svg><use href="#vp4"/></svg></div><div class="b"><svg><use href="#link"/></svg></div><div class="b"><svg><use href="#tbl"/></svg></div><div class="b"><svg><use href="#annot"/></svg></div><div class="b"><svg><use href="#arrow"/></svg></div><div class="b"><svg><use href="#abox"/></svg></div><div class="b"><svg><use href="#ptr"/></svg></div><div class="b"><svg><use href="#tbl"/></svg></div><div class="b"><svg><use href="#lst"/></svg></div>
<i class="grip"></i>
<div class="b"><svg><use href="#lad"/></svg></div><div class="b"><svg><use href="#lad2"/></svg></div>
<i class="grip gap-a"></i>
<div class="b on"><svg><use href="#ptr"/></svg></div>
<div class="combo c-all"><span>All</span><i class="chev"></i></div>
<div class="b nar"><svg><use href="#copy"/></svg></div>
<i class="bar"></i>
<div class="b"><svg><use href="#wire3"/></svg></div><div class="b"><svg><use href="#rect"/></svg></div><div class="b"><svg><use href="#nds"/></svg></div><div class="b on"><svg><use href="#boxor"/></svg></div>
<i class="grip w9"></i>
<div class="b"><svg><use href="#wc1"/></svg></div><div class="b"><svg><use href="#wc2"/></svg></div><div class="b"><svg><use href="#wc3"/></svg></div><div class="b"><svg><use href="#wc4"/></svg></div>
<i class="grip w7"></i>
<div class="b"><svg><use href="#note"/></svg></div>
<i class="grip w10"></i>
<div class="b"><svg><use href="#info"/></svg></div>
<i class="grip w9"></i>
<div class="b"><svg><use href="#first"/></svg></div><div class="b"><svg><use href="#prev"/></svg></div><div class="b"><svg><use href="#next"/></svg></div><div class="b"><svg><use href="#last"/></svg></div>
</section>

<section class="tbar tb2">
<div class="b"><svg><use href="#pan"/></svg></div><div class="b"><svg><use href="#rot"/></svg></div><div class="b"><svg><use href="#mag"/></svg></div><div class="b"><svg><use href="#bzoom"/></svg></div><div class="b"><svg><use href="#fit"/></svg></div><div class="b"><svg><use href="#flip"/></svg></div>
<i class="grip"></i>
<div class="b"><svg><use href="#ax1"/></svg></div><div class="b"><svg><use href="#ax2"/></svg></div><div class="b"><svg><use href="#ax3"/></svg></div><div class="b"><svg><use href="#ax4"/></svg></div><div class="b"><svg><use href="#ax5"/></svg></div><div class="b"><svg><use href="#ax6"/></svg></div><div class="b"><svg><use href="#ax7"/></svg></div>
<div class="b num">1</div><div class="b num">2</div><div class="b num">3</div><div class="b num">4</div>
<div class="b"><svg><use href="#axr"/></svg></div>
<i class="grip w8"></i>
<div class="b"><svg><use href="#venn1"/></svg></div><div class="b"><svg><use href="#venn2"/></svg></div><div class="b"><svg><use href="#dot"/></svg></div><div class="b"><svg><use href="#boxc"/></svg></div><div class="b"><svg><use href="#undo"/></svg></div><div class="b"><svg><use href="#redo"/></svg></div><div class="b"><svg><use href="#dg"/></svg></div><div class="b"><svg><use href="#tbl"/></svg></div>
<i class="grip w8"></i>
<div class="b"><svg><use href="#pal"/></svg></div>
<div class="combo c-vis"><span>Visualization defaults</span><i class="chev"></i></div>
<div class="b"><svg><use href="#cub"/></svg></div><i class="drop"></i>
<i class="grip w8"></i>
<div class="b"><svg><use href="#prim"/></svg></div>
<div class="combo c-p"><span>Primary</span><i class="chev"></i></div>
<div class="combo c-s"><span>S</span><i class="chev"></i></div>
<div class="combo c-m"><span>Mises</span><i class="chev"></i></div>
<div class="b on"><svg><use href="#sync"/></svg></div>
</section>

<main class="main">
<aside class="left">
<div class="tabs"><span class="tab">Model</span><span class="tab sel">Results</span></div>
<div class="sess"><div class="combo c-sess"><span>Session Data</span><i class="chev"></i></div>
<svg class="s1"><use href="#updn"/></svg><svg class="s2"><use href="#dirup"/></svg><svg class="s2"><use href="#fam"/></svg><svg class="s2"><use href="#bulb"/></svg></div>
<ul class="tree">
<li class="exp"><i class="lead"></i><svg><use href="#stack"/></svg>Output Databases (1)</li>
<li class="exp"><i class="lead"></i><svg><use href="#mdb"/></svg>Model Database (2)</li>
<li class="exp"><i class="lead"></i><svg class="spec"><rect x="6" y="0" width="6" height="18" fill="url(#spec)" stroke="#222"/></svg>Spectrums (7)</li>
<li><i class="lead"></i><svg><use href="#xyp"/></svg>XYPlots</li>
<li><i class="lead"></i><svg><use href="#xyd"/></svg>XYData</li>
<li><i class="lead"></i><svg><use href="#ppath"/></svg>Paths</li>
<li class="exp"><i class="lead"></i><svg><use href="#dgr"/></svg>Display Groups (1)</li>
<li><i class="lead"></i><svg><use href="#fb"/></svg>Free Body Cuts</li>
<li><i class="lead"></i><svg><use href="#str"/></svg>Streams</li>
<li><i class="lead"></i><svg><use href="#mvi"/></svg>Movies</li>
<li class="last"><i class="lead"></i><svg><use href="#img"/></svg>Images</li>
</ul>
</aside>

<div class="right">
<div class="modbar">
<label>Module:</label><div class="combo c-mod"><i class="spin"></i><span>Visualization</span><i class="chev"></i></div>
<label class="lm2">Model:</label><div class="combo c-mdl"><i class="spin"></i><span>D:/CAE/Abaqus/wear/Job-1.odb</span><i class="chev"></i></div>
</div>
<div class="work">
<div class="toolbox">
<div class="tg tg-a"><div class="tr"><svg><use href="#t123"/></svg><svg><use href="#t123b"/></svg></div><div class="tr"><svg><use href="#tsy"/></svg><svg class="ovl"><use href="#opt"/><use href="#stack" width="13" height="13"/></svg></div></div>
<div class="tg tg-b"><div class="tr"><svg><use href="#lm"/></svg><svg><use href="#lmb"/></svg></div><div class="tr"><svg class="on"><use href="#lc"/></svg><svg><use href="#optc"/></svg></div><div class="tr"><svg><use href="#lx"/></svg><svg><use href="#optx"/></svg></div><div class="tr"><svg><use href="#ly"/></svg><svg><use href="#opty"/></svg></div><div class="tr"><svg><use href="#copyy"/></svg><svg><use href="#optb"/></svg></div></div>
<div class="tg"><div class="tr"><svg><use href="#mov"/></svg><svg><use href="#mov2"/></svg></div><div class="tr"><svg><use href="#mov3"/></svg><svg><use href="#lst2"/></svg></div></div>
<div class="tg"><div class="tr"><svg><use href="#tri"/></svg><svg><use href="#tbl"/></svg></div></div>
<div class="tg"><div class="tr"><svg><use href="#xyt"/></svg><svg><use href="#tbl"/></svg></div><div class="tr"><svg><use href="#pth"/></svg><svg><use href="#xyl"/></svg></div></div>
<div class="tg"><div class="tr"><svg><use href="#fc2"/></svg><svg><use href="#fc3"/></svg></div></div>
<div class="tg"><div class="tr"><svg><use href="#lcut"/></svg><svg><use href="#tbl"/></svg></div></div>
<div class="tg"><div class="tr"><svg><use href="#fb"/></svg><svg><use href="#tbl"/></svg></div></div>
<div class="tg"><div class="tr"><svg><use href="#str"/></svg><svg><use href="#tbl"/></svg></div></div>
<div class="tg"><div class="tr"><svg><use href="#cpd"/></svg><svg><use href="#tbl"/></svg></div></div>
<div class="tg end"><div class="tr"><svg><use href="#pen"/></svg></div></div>
</div>

<div class="viewport">
<canvas id="model" class="model" width="1083" height="671"></canvas>
<svg class="cursor"><use href="#arr"/></svg>
<div class="legend">
<div class="lg-title">S, Mises<br>(Avg: 75%)</div>
<div class="lg-rows">
<div class="lg-row"><i class="sw c1"></i><span>+7.324e+00</span></div>
<div class="lg-row"><i class="sw c2"></i><span>+6.714e+00</span></div>
<div class="lg-row"><i class="sw c3"></i><span>+6.104e+00</span></div>
<div class="lg-row"><i class="sw c4"></i><span>+5.494e+00</span></div>
<div class="lg-row"><i class="sw c5"></i><span>+4.883e+00</span></div>
<div class="lg-row"><i class="sw c6"></i><span>+4.273e+00</span></div>
<div class="lg-row"><i class="sw c7"></i><span>+3.663e+00</span></div>
<div class="lg-row"><i class="sw c8"></i><span>+3.053e+00</span></div>
<div class="lg-row"><i class="sw c9"></i><span>+2.443e+00</span></div>
<div class="lg-row"><i class="sw c10"></i><span>+1.833e+00</span></div>
<div class="lg-row"><i class="sw c11"></i><span>+1.223e+00</span></div>
<div class="lg-row"><i class="sw c12"></i><span>+6.126e-01</span></div>
<div class="lg-row nosw"><i class="sw"></i><span>+2.450e-03</span></div>
</div>
</div>
<svg class="triad" viewBox="0 0 60 50"><path d="M9 4l6 11h-4v27H7V15H3z" fill="#18a838" stroke="#0b6a20" stroke-width=".5"/><path d="M50 42l-13-6v4H12v4.500h25v4z" fill="#c81818" stroke="#701010" stroke-width=".5"/><circle cx="9" cy="42" r="5.500" fill="#0a1aa0"/></svg>
<span class="axl ax-y">Y</span><span class="axl ax-z">Z</span><span class="axl ax-x">X</span>
<div class="info"><div><span class="odb">ODB: Job-1.odb</span><span class="prod">    Abaqus/Standard 3DEXPERIENCE R2019x</span></div><div>Step: Step-1</div><div>Increment     25: Step Time =   0.3710</div></div>
</div>
</div>
<div class="strip"></div>
</div>
</main>

<section class="msgrow">
<div class="msgtabs"><div class="mt act"><svg><use href="#note"/></svg></div><div class="mt pr"><svg viewBox="0 0 24 24"><rect x="1" y="1" width="22" height="22" fill="url(#yel)" stroke="#222"/><path d="M4 8l4 4-4 4M10 8l4 4-4 4M16 8l4 4-4 4" stroke="#222" stroke-width="1.800" fill="none"/></svg></div></div>
<pre class="msg">1800 elements have been generated on part: Part-1
The model database has been saved to "D:\CAE\Abaqus\wear\ALE.cae".
The job "Job-1" has been created.
The job input file "Job-1.inp" has been submitted for analysis.
Job Job-1: Analysis Input File Processor completed successfully.
The model "Model-2" has been created.
Error in job Job-1: Too many attempts made for this increment
Error in job Job-1: THE ANALYSIS HAS BEEN TERMINATED DUE TO PREVIOUS ERRORS. ALL OUTPUT REQUESTS HAVE BEEN WRITTEN FOR THE LAST CONVERGED INCREMENT.
Job Job-1: Abaqus/Standard aborted due to errors.
Error in job Job-1: Abaqus/Standard Analysis exited with an error - Please see the  message file for possible error messages if the file exists.
Job Job-1 aborted due to errors.
The model database has been saved to "D:\CAE\Abaqus\wear\ALE.cae".
The job input file "Job-1.inp" has been submitted for analysis.
Job Job-1: Analysis Input File Processor completed successfully.</pre>
</section>

<footer class="taskbar">
<div class="tk first"><svg class="w22"><use href="#win"/></svg></div>
<div class="tk"><i class="cort"></i></div>
<div class="tk"><svg><use href="#lam"/></svg></div>
<div class="tk"><svg><use href="#ser"/></svg></div>
<div class="tk"><svg><use href="#calc"/></svg></div>
<div class="tk"><svg><use href="#mtc"/></svg></div>
<div class="tk run"><svg><use href="#chr"/></svg></div>
<div class="tk run"><svg><use href="#fold"/></svg></div>
<div class="tk run"><svg><use href="#cmd"/></svg></div>
<div class="tk run act"><svg><use href="#abq"/></svg></div>
<div class="tk run"><svg><use href="#mx"/></svg></div>
<div class="tk run"><svg><use href="#gc"/></svg></div>
<div class="tk run"><svg><use href="#oc"/></svg></div>
<div class="tk run"><svg><use href="#mtw"/></svg></div>
</footer>
<script src="app.js"></script>
</body>
</html>
```

FILE: styles.css
```css
*{box-sizing:border-box}
html,body{margin:0;padding:0}
body{width:1440px;height:1080px;overflow:hidden;background:#f4f4f4;font-family:"Noto Sans","Open Sans",sans-serif;font-size:12.5px;color:#1a1a1a;position:relative}
.defs{position:absolute;width:0;height:0}
i{font-style:normal;display:block}
.sv{font-family:"Liberation Serif",serif;text-anchor:middle;font-weight:700}
.sm{font-size:11px}
.lg{font-size:20px}
.it{font-style:italic}
.dk{fill:#2a3010}
.sx{font-family:"Liberation Sans",sans-serif;font-size:7.500px;text-anchor:middle;fill:#223}
.sm2{font-family:"Liberation Sans",sans-serif;font-size:8px;text-anchor:middle;font-weight:700;fill:#4a3208}
.sm2.red{fill:#b03020}

.frame{position:absolute;background:#10b57c;z-index:5}
.frame-top{left:0;top:0;width:98px;height:3px}
.frame-left{left:0;top:0;width:6px;height:118px}
.frame-left2{left:0;top:960px;width:6px;height:120px}
.frame-bot{left:0;top:1074px;width:120px;height:6px}
.meet{position:absolute;left:905px;top:0;width:111px;height:20px;background:#6f6f6f;border-radius:0 0 6px 6px;display:flex;align-items:center;gap:5px;padding-left:10px;z-index:5;box-shadow:0 1px 2px rgba(0,0,0,.25)}
.mdot{width:9px;height:9px;border-radius:50%;background:#1fa860;filter:blur(1px)}
.mdot.small{width:6px;height:6px;margin-left:5px;background:#30c080}
.mname{font-family:"Noto Sans CJK SC",sans-serif;font-size:12px;color:#d4d4d4;filter:blur(.4px)}

.titlebar{height:25px;background:#fff;display:flex;align-items:center;padding:0 0 2px 6px;font-size:12.6px;color:#222}
.ttlicon{width:17px;height:17px;flex:none}
.menubar{height:24px;background:#f8f8f8;display:flex;align-items:center;padding-left:5px;font-size:12.5px}
.winicon{width:15px;height:15px;margin-right:10px;flex:none}
.menubar span{margin-right:15.600px;white-space:nowrap}
.menubar u{text-underline-offset:2px}
.hlpicon{width:14px;height:14px;margin-left:-6px}
.hq{font-size:11px;margin-left:-5px}

.tbar{height:28px;background:#f2f2f2;display:flex;align-items:center;padding-left:7px;border-top:1px solid #dcdcdc}
.b{width:26px;height:26px;display:flex;align-items:center;justify-content:center;flex:none}
.b svg{width:24px;height:24px}
.b.nar{width:22px}
.b.nar svg{width:20px;height:20px}
.b.on{background:#cfe3f5;border:1px solid #a8c8e6}
.num{font-family:"Liberation Sans",sans-serif;font-weight:700;font-size:17px;color:#c0431f}
.grip{width:11px;height:24px;flex:none;position:relative}
.grip::after{content:"";position:absolute;left:4px;top:4px;width:2px;height:16px;background:repeating-linear-gradient(#999 0 2px,transparent 2px 4px)}
.gap-a{margin-left:86px;width:10px}
.w7{width:7px}
.w8{width:8px}
.w9{width:9px}
.w10{width:10px}
.w7::after,.w8::after{left:3px}
.bar{width:1px;height:20px;background:#aaa;margin:0 2px 0 1px;flex:none}
.combo{display:flex;align-items:center;height:24px;background:#fff;border:1px solid #a9a9a9;font-size:12.5px;padding-left:2px;flex:none;white-space:nowrap;overflow:hidden}
.combo span{flex:1}
.chev{width:13px;height:20px;margin-right:1px;background:#e4e4e4;border:1px solid #b4b4b4;position:relative;flex:none}
.chev::after{content:"";position:absolute;left:2.500px;top:5px;width:5px;height:5px;border-right:1px solid #666;border-bottom:1px solid #666;transform:rotate(45deg)}
.c-all{width:115px;border:2px solid #c0d4e8;padding-left:1px}
.c-vis{width:148px;margin-left:1px}
.c-p{width:87px;margin-right:2px}
.c-s{width:90px;margin-right:3px}
.c-m{width:92px;margin-right:2px}
.drop{width:0;height:0;border:4px solid transparent;border-top:5px solid #111;margin:4px 4px 0 2px;flex:none}

.main{display:flex;height:743px}
.left{width:290px;flex:none;background:#f7f7f7;padding:7px 0 0 5px;display:flex;flex-direction:column}
.tabs{display:flex;height:26px;align-items:flex-end;border-bottom:1px solid #c8c8c8}
.tab{padding:0 7px 2px 6px;height:22px;display:flex;align-items:flex-end;font-size:12.5px}
.tab.sel{background:#fff;border:1px solid #d4d4d4;border-bottom:0;height:26px;padding:0 10px 3px 9px}
.sess{display:flex;align-items:center;height:34px;gap:5px}
.c-sess{width:186px;height:23px}
.s1{width:12px;height:20px;margin-left:2px}
.s2{width:20px;height:20px;margin-left:1px}
.tree{list-style:none;margin:0;padding:0;width:284px;height:671px;background:#fff;border:1px solid #a8a8a8;font-size:12.5px;color:#222}
.tree li{height:21px;display:flex;align-items:center;white-space:nowrap;padding-bottom:2px}
.tree svg{width:18px;height:18px;margin-right:5px;flex:none}
.lead{width:13px;height:21px;flex:none;position:relative}
.lead::before{content:"";position:absolute;left:6px;top:0;height:21px;border-left:1px dotted #888}
.lead::after{content:"";position:absolute;left:7px;top:10px;width:7px;border-top:1px dotted #888}
.tree li:first-child .lead::before{top:10px;height:11px}
.tree .last .lead::before{height:11px}
.exp .lead::after{left:2px;top:6px;width:9px;height:9px;border:1px solid #999;background:linear-gradient(#555,#555) center/5px 1px no-repeat,linear-gradient(#555,#555) center/1px 5px no-repeat,#fff}

.right{flex:1;display:flex;flex-direction:column;min-width:0}
.modbar{height:34px;background:#f6f6f6;display:flex;align-items:center;padding-left:13px;font-size:12.5px;border-bottom:1px solid #e0e0e0;flex:none}
.modbar label{margin-right:2px}
.modbar .lm2{margin-left:13px;margin-right:5px}
.spin{width:9px;height:20px;flex:none;margin-right:4px;background:linear-gradient(#555,#555) center/7px 1px no-repeat,#ececec;border:1px solid #bbb;position:relative}
.spin::before{content:"";position:absolute;left:1px;top:2px;border:2.500px solid transparent;border-bottom:3px solid #333;border-top:0}
.spin::after{content:"";position:absolute;left:1px;bottom:2px;border:2.500px solid transparent;border-top:3px solid #333;border-bottom:0}
.c-mod{width:112px}
.c-mdl{width:225px}
.work{display:flex;height:671px;flex:none}
.toolbox{width:67px;flex:none;background:#f3f3f3;display:flex;flex-direction:column;padding-left:6px;padding-right:2px}
.tg{padding:5px 0 1px;border-bottom:1px solid #bcbcbc}
.tg-a{padding-bottom:0}
.tg-b{padding-bottom:2px}
.tg.end{border:0}
.tr{height:28px;display:flex;align-items:center;gap:4px;padding-left:3px}
.tr svg{width:24px;height:24px;flex:none}
.tr svg.on{background:#cfe3f5;outline:2px solid #cfe3f5}
.viewport{flex:1;position:relative;border-left:1px solid #15233c;background:linear-gradient(#1a2b4a 0,#2b3e58 50%,#4a5a74 67%,#68768f 81%,#a0aec4 100%);overflow:hidden;color:#fff;font-family:"DejaVu Sans",sans-serif}
.model{position:absolute;left:0;top:0}
.cursor{position:absolute;left:688px;top:251px;width:18px;height:20px}
.legend{position:absolute;left:30px;top:13px;width:289px;height:448px;border:1px solid #e8ecf0;padding:28px 0 0 25px}
.lg-title{font-size:28.500px;line-height:32px;height:67px}
.lg-rows{display:flex;flex-direction:column}
.lg-row{height:26px;display:flex;align-items:center;font-size:26.300px;white-space:nowrap}
.lg-row span{margin-left:27px;line-height:26px}
.sw{width:39px;height:26px;flex:none;border:1px solid #dfe4e8;border-bottom:0;position:relative;top:14px}
.sw::after{content:"";position:absolute;left:38px;top:-1px;width:13px;border-top:1px solid #e8ecf0}
.nosw .sw{background:none;border:0;border-top:1px solid #e8ecf0;top:0;height:0}
.nosw .sw::after{left:39px}
.c1{background:#ff1a00}.c2{background:#ff6a00}.c3{background:#ffb000}.c4{background:#e8e800}.c5{background:#8fe000}.c6{background:#30d800}.c7{background:#10d830}.c8{background:#00d880}.c9{background:#00e8e0}.c10{background:#08a0f8}.c11{background:#0858f8}.c12{background:#0000f8}
.triad{position:absolute;left:114px;top:568px;width:60px;height:50px}
.axl{position:absolute;font-size:27px;line-height:30px}
.ax-y{left:115px;top:530px}
.ax-z{left:114px;top:595px}
.ax-x{left:178px;top:595px}
.info{position:absolute;left:216px;top:569px;font-size:28px;line-height:27px;white-space:pre}
.odb{letter-spacing:.2px}
.prod{font-size:27.400px;margin-left:4px}

.strip{height:38px;background:#f4f4f4;border-top:2px solid #fafafa;flex:none}
.msgrow{height:192px;display:flex;border-top:1px solid #c4c4c4;background:#f4f4f4;padding-top:2px}
.msgtabs{width:41px;flex:none;display:flex;flex-direction:column}
.mt{height:36px;display:flex;align-items:center;justify-content:center;padding-right:2px}
.mt svg{width:25px;height:25px}
.mt.act{background:#fbfbfb;height:37px}
.mt.pr{background:#ececec;height:34px;margin-left:3px}
.msg{margin:0;flex:1;height:187px;background:#fff;border:1px solid #b4b4b4;padding:1px 0 0 3px;font-family:"Liberation Mono",monospace;font-size:13.333px;line-height:13px;color:#111;overflow:hidden}
.taskbar{position:absolute;left:0;right:0;top:1040px;height:40px;background:#2f3540;display:flex;align-items:stretch}
.tk{width:49.200px;display:flex;align-items:center;justify-content:center;position:relative;flex:none}
.tk.first{width:48px}
.tk svg{width:26px;height:26px}
.tk .w22{width:18px;height:18px;margin-left:-3px}
.cort{width:15px;height:15px;border-radius:50%;border:2px solid #fff}
.tk.act{background:#5b5e66}
.tk.run::after{content:"";position:absolute;left:5px;right:5px;bottom:0;height:2px;background:#9aa0a8}
```

FILE: app.js
```js
(function () {
  var c = document.getElementById('model');
  var g = c.getContext('2d');
  var OX = 357, OY = 139, CX = 1043.4, BOT = 581, AMP = 15, SPAN = .85;

  function interp(tbl, t) {
    if (t <= tbl[0][0]) return tbl[0][1];
    for (var i = 1; i < tbl.length; i++) {
      if (t <= tbl[i][0]) {
        var a = tbl[i - 1], b = tbl[i], p = tbl[i - 2] || a, q = tbl[i + 1] || b;
        var s = (t - a[0]) / (b[0] - a[0]);
        var m0 = (b[1] - p[1]) / ((b[0] - p[0]) || 1), m1 = (q[1] - a[1]) / ((q[0] - a[0]) || 1);
        var h = b[0] - a[0], s2 = s * s, s3 = s2 * s;
        return (2 * s3 - 3 * s2 + 1) * a[1] + (s3 - 2 * s2 + s) * h * m0 + (-2 * s3 + 3 * s2) * b[1] + (s3 - s2) * h * m1;
      }
    }
    return tbl[tbl.length - 1][1];
  }
  var TOP = [[0, 367.5], [32, 363], [56, 350], [82, 328], [112, 313], [152, 305], [213, 298], [302, 294], [340, 293]];
  var HW = [[0, 302], [.2, 306], [.47, 308], [.65, 305], [.82, 297], [1, 286]];

  function node(i, j) {
    var u = (i - 30) / 30, v = j / 30, a = Math.abs(u), sgn = u < 0 ? -1 : 1;
    var wave = AMP * Math.sin(Math.PI * Math.min(1, a / SPAN));
    var d = a * interp(HW, v) + wave * Math.pow(1 - v, 2.5);
    var y = interp(TOP, a * 302 + wave) * (1 - v) + BOT * v;
    return [CX + sgn * d - OX, y - OY];
  }
  function Z(p) { return [730 + p[0] * .4018 - OX, 280 + p[1] / 3 - OY]; }
  function smooth(pts) {
    g.beginPath();
    var n = pts.length, last = pts[n - 1], f = pts[0];
    g.moveTo((last[0] + f[0]) / 2, (last[1] + f[1]) / 2);
    for (var i = 0; i < n; i++) {
      var a = pts[i], b = pts[(i + 1) % n];
      g.quadraticCurveTo(a[0], a[1], (a[0] + b[0]) / 2, (a[1] + b[1]) / 2);
    }
    g.closePath();
  }
  function sym(left, col, k) {
    k = k || 1;
    var w = left.map(function (p) { return [780 - (780 - p[0]) * k, p[1]]; });
    var all = w.slice();
    for (var i = w.length - 1; i >= 0; i--) {
      if (w[i][0] !== 780) all.push([1560 - w[i][0], w[i][1]]);
    }
    smooth(all.map(Z)); g.fillStyle = col; g.fill();
  }
  function both(p, col) {
    smooth(p.map(Z)); g.fillStyle = col; g.fill();
    smooth(p.map(function (q) { return [1560 - q[0], q[1]]; }).map(Z)); g.fill();
  }

  var i, j, P = [];
  for (i = 0; i <= 60; i++) { P[i] = []; for (j = 0; j <= 30; j++) P[i][j] = node(i, j); }
  g.save();
  g.beginPath();
  g.moveTo(P[0][0][0], P[0][0][1]);
  for (i = 1; i <= 60; i++) g.lineTo(P[i][0][0], P[i][0][1]);
  for (j = 1; j <= 30; j++) g.lineTo(P[60][j][0], P[60][j][1]);
  for (i = 59; i >= 0; i--) g.lineTo(P[i][30][0], P[i][30][1]);
  for (j = 29; j >= 0; j--) g.lineTo(P[0][j][0], P[0][j][1]);
  g.closePath(); g.clip();

  g.fillStyle = '#0404d8'; g.fillRect(0, 0, 1083, 672);
  sym([[780, -20], [250, -20], [262, 60], [285, 120], [350, 140], [480, 170], [440, 260], [395, 345], [345, 440], [240, 520], [100, 620], [60, 700], [35, 830], [30, 1000], [780, 1000]], '#1050d8');
  both([[-20, 330], [20, 340], [55, 420], [55, 520], [30, 690], [-20, 690]], '#1050d8');
  sym([[780, -20], [400, -20], [410, 70], [440, 90], [540, 130], [490, 230], [440, 310], [400, 420], [365, 520], [330, 580], [200, 650], [120, 720], [75, 800], [45, 1000], [780, 1000]], '#1888d8');
  sym([[780, -20], [520, -20], [525, 100], [565, 135], [545, 180], [500, 270], [450, 400], [430, 500], [430, 590], [330, 640], [210, 700], [130, 770], [70, 860], [60, 1000], [780, 1000]], '#18b8c8');
  sym([[780, -20], [570, 100], [575, 145], [545, 230], [515, 330], [497, 440], [512, 540], [560, 630], [640, 700], [720, 740], [780, 752]], '#10b898', 1.06);
  sym([[780, -20], [590, 130], [590, 165], [560, 250], [535, 350], [530, 450], [550, 550], [600, 630], [680, 680], [780, 700]], '#12b840', 1.08);
  sym([[780, -20], [610, 160], [610, 185], [590, 280], [575, 380], [585, 470], [620, 550], [680, 595], [780, 612]], '#2cb810', 1.08);
  sym([[780, -20], [625, 170], [622, 195], [610, 300], [605, 390], [625, 480], [680, 555], [780, 590]], '#80c810', 1.08);
  sym([[780, 285], [710, 275], [650, 245], [630, 300], [625, 380], [650, 470], [710, 520], [780, 535]], '#c8c818', 1.06);
  sym([[780, 292], [710, 285], [660, 300], [640, 340], [660, 420], [700, 470], [780, 495]], '#e0a018');
  sym([[780, 300], [720, 300], [680, 320], [655, 340], [680, 352], [675, 380], [710, 430], [780, 460]], '#e06018');
  sym([[780, 308], [730, 315], [710, 345], [715, 385], [750, 412], [780, 416]], '#e02010');
  both([[300, 960], [320, 885], [440, 880], [470, 960]], '#10b898');
  both([[50, 960], [70, 878], [100, 878], [108, 960]], '#12b840');
  sym([[780, 790], [510, 790], [545, 850], [592, 960], [780, 960]], '#1888d8');
  sym([[780, 832], [730, 835], [680, 855], [665, 960], [780, 960]], '#1050d8');
  sym([[780, 870], [745, 880], [730, 960], [780, 960]], '#0404d8');

  g.strokeStyle = '#04082a';
  g.lineWidth = .9;
  for (j = 0; j <= 30; j++) {
    g.beginPath();
    for (i = 0; i <= 60; i++) g[i ? 'lineTo' : 'moveTo'](P[i][j][0], P[i][j][1]);
    g.stroke();
  }
  for (i = 0; i <= 60; i++) {
    g.beginPath();
    for (j = 0; j <= 30; j++) g[j ? 'lineTo' : 'moveTo'](P[i][j][0], P[i][j][1]);
    g.stroke();
  }
  g.restore();
  g.strokeStyle = '#04082a';
  g.beginPath();
  for (i = 0; i <= 60; i++) g[i ? 'lineTo' : 'moveTo'](P[i][0][0], P[i][0][1]);
  for (j = 1; j <= 30; j++) g.lineTo(P[60][j][0], P[60][j][1]);
  for (i = 59; i >= 0; i--) g.lineTo(P[i][30][0], P[i][30][1]);
  g.closePath(); g.stroke();

  g.strokeStyle = '#e8edf2';
  g.lineWidth = 1;
  g.beginPath();
  g.moveTo(737 - OX, 139 - OY);
  for (var d = 85; d >= -85; d -= 2) {
    g.lineTo(CX - d - OX, interp(TOP, Math.abs(d)) - OY - .5);
  }
  g.lineTo(1350 - OX, 139 - OY);
  g.stroke();
  g.beginPath();
  g.moveTo(CX - 6 - OX, 363 - OY); g.lineTo(CX + 6 - OX, 374 - OY);
  g.moveTo(CX + 6 - OX, 363 - OY); g.lineTo(CX - 6 - OX, 374 - OY);
  g.stroke();
})();
```
